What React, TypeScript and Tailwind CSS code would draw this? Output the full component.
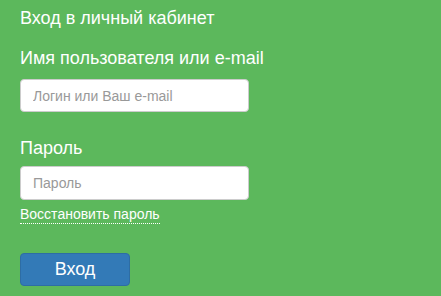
import React from "react";

export default function App() {
  return (
    <div
      className="w-[441px] h-[296px] bg-[#5cb85c] text-white overflow-hidden"
      style={{ fontFamily: '"Liberation Sans", Arial, sans-serif' }}
    >
      <div className="pl-[20px] pt-[7px] flex flex-col">
        <h1 className="text-[18px] leading-[22px] font-normal m-0">Вход в личный кабинет</h1>
        <label className="mt-[19px] text-[18px] leading-[20px]">Имя пользователя или e-mail</label>
        <input
          className="mt-[11px] w-[229px] h-[33px] rounded-[4px] border border-[#cccccc] bg-white px-[12px] text-[14px] text-[#555] placeholder:text-[#999] outline-none"
          placeholder="Логин или Ваш e-mail"
        />
        <label className="mt-[26px] text-[18px] leading-[20px]">Пароль</label>
        <input
          type="password"
          className="mt-[8px] w-[229px] h-[34px] rounded-[4px] border border-[#cccccc] bg-white px-[12px] text-[14px] text-[#555] placeholder:text-[#999] outline-none"
          placeholder="Пароль"
        />
        <div className="mt-[2px]">
          <a className="text-[14px] leading-[17px] text-white border-b border-dotted border-white inline-block">
            Восстановить пароль
          </a>
        </div>
        <button className="mt-[27px] w-[110px] h-[33px] rounded-[4px] bg-[#337ab7] border border-[#2e6da4] text-white text-[18px]">
          Вход
        </button>
      </div>
    </div>
  );
}
